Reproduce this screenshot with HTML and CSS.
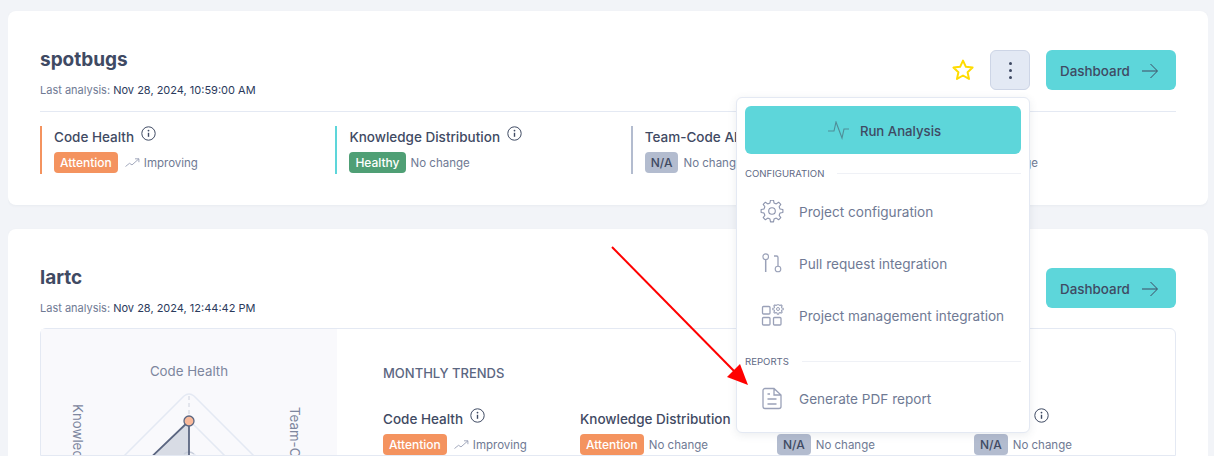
FILE: index.html
```html
<!DOCTYPE html>
<html lang="en-US">
    <head>
        <title>Projects</title>
        <meta name="viewport" content="width=device-width, initial-scale=1.0">
        <link rel="stylesheet" href="styles.css">
    </head>
    <body>
        <svg class="defs" width="0" height="0">
            <symbol id="info" viewBox="0 0 15 15">
                <circle cx="7.5" cy="7.5" r="6.7" fill="none" stroke="currentColor"/>
                <path d="M7.5 6.8v4" fill="none" stroke="currentColor" stroke-width="1.4"/>
                <circle cx="7.5" cy="4.6" r=".9" fill="currentColor"/>
            </symbol>
            <symbol id="trend" viewBox="0 0 15 10">
                <path d="M.5 8.5l4-3.2 2.5 1.6 6.8-6M10 .8h3.9v3.4" fill="none" stroke="currentColor" stroke-width=".8"/>
            </symbol>
            <symbol id="arrow" viewBox="0 0 16 16">
                <path d="M0 8h15M8.5 1l7 7-7 7" fill="none" stroke="currentColor" stroke-width="1"/>
            </symbol>
            <path id="cog" stroke-linejoin="round" d="M9.99 2.95L10.47.11H13.53L14.01 2.95L16.27 3.89L18.62 2.22L20.78 4.38L19.11 6.73L20.05 8.99L22.89 9.47V12.53L20.05 13.01L19.11 15.27L20.78 17.62L18.62 19.78L16.27 18.11L14.01 19.05L13.53 21.89H10.47L9.99 19.05L7.73 18.11L5.38 19.78L3.22 17.62L4.89 15.27L3.95 13.01L1.11 12.53V9.47L3.95 8.99L4.89 6.73L3.22 4.38L5.38 2.22L7.73 3.89z"/>
        </svg>

        <section class="card">
            <header class="card-head">
                <div>
                    <h2>spotbugs</h2>
                    <p class="last">Last analysis: <b>Nov 28, 2024, 10:59:00 AM</b></p>
                </div>
                <div class="actions">
                    <svg class="star" width="24" height="24" viewBox="0 0 24 24">
                        <path d="M12 2.6l2.9 6.2 6.7.8-5 4.6 1.4 6.7-6-3.4-6 3.4 1.4-6.7-5-4.6 6.7-.8z" fill="none" stroke="#ffdc00" stroke-width="2" stroke-linejoin="round"/>
                    </svg>
                    <button class="kebab"><i></i><i></i><i></i></button>
                    <a class="dash">Dashboard <svg width="16" height="16"><use href="#arrow"/></svg></a>
                </div>

                <div class="menu">
                    <a class="run">
                        <svg width="22" height="20" viewBox="0 0 22 20">
                            <path d="M1 10h6l2-9 6 16 2-9h5" fill="none" stroke="#4f8d97" stroke-width="1.1"/>
                        </svg>
                        Run Analysis
                    </a>
                    <div class="menu-title"><span>CONFIGURATION</span></div>
                    <a class="menu-item config">
                        <svg width="24" height="24" viewBox="0 0 24 24" fill="none" stroke="#8b93ac" stroke-width="1.1">
                            <use href="#cog"/>
                            <circle cx="12" cy="11" r="3.3"/>
                        </svg>
                        Project configuration
                    </a>
                    <a class="menu-item">
                        <svg width="24" height="24" viewBox="0 0 24 24" fill="none" stroke="#9aa1b8" stroke-width="1.1">
                            <circle cx="5.700" cy="4.700" r="2.800"/>
                            <path d="M5.700 7.500V20" stroke-width="1.500"/>
                            <path d="M14 4h2.500a1.500 1.500 0 0 1 1.500 1.500V14" stroke-width="1.300"/>
                            <circle cx="18" cy="17" r="2.800"/>
                        </svg>
                        Pull request integration
                    </a>
                    <a class="menu-item">
                        <svg width="24" height="24" viewBox="0 0 24 24" fill="none" stroke="#9aa1b8" stroke-width="1.300">
                            <rect x="2.500" y="2.500" width="7.500" height="7.500" rx="1"/>
                            <rect x="2.500" y="13.500" width="7.500" height="7.500" rx="1"/>
                            <rect x="13.500" y="13.500" width="7.500" height="7.500" rx="1"/>
                            <use href="#cog" transform="translate(18 5) scale(.48) translate(-12 -11)" stroke-width="2.200"/>
                            <circle cx="18" cy="5" r="1.500" stroke-width="1"/>
                        </svg>
                        Project management integration
                    </a>
                    <div class="menu-title reports"><span>REPORTS</span></div>
                    <a class="menu-item pdf">
                        <svg width="24" height="24" viewBox="0 0 24 24" fill="none" stroke="#9aa1b8" stroke-width="1.300">
                            <path d="M5 1.500h9l7 6.500v11.500a2 2 0 0 1-2 2H5a2 2 0 0 1-2-2v-16a2 2 0 0 1 2-2zM14 1.500V8h7M7.500 7h2.500M7.500 12h9M7.500 17h9"/>
                        </svg>
                        Generate PDF report
                    </a>
                </div>
            </header>

            <div class="metrics">
                <div class="metric orange">
                    <h3>Code Health <svg width="15" height="15"><use href="#info"/></svg></h3>
                    <p><span class="badge attention">Attention</span><svg class="trend" width="15" height="10"><use href="#trend"/></svg>Improving</p>
                </div>
                <div class="metric teal">
                    <h3>Knowledge Distribution <svg width="15" height="15"><use href="#info"/></svg></h3>
                    <p><span class="badge healthy">Healthy</span>No change</p>
                </div>
                <div class="metric gray">
                    <h3>Team-Code Alignment <svg width="15" height="15"><use href="#info"/></svg></h3>
                    <p><span class="badge na">N/A</span>No change</p>
                </div>
                <div class="metric gray">
                    <h3>Delivery <svg width="15" height="15"><use href="#info"/></svg></h3>
                    <p><span class="badge na">N/A</span>No change</p>
                </div>
            </div>
        </section>

        <section class="card">
            <header class="card-head">
                <div>
                    <h2>lartc</h2>
                    <p class="last">Last analysis: <b>Nov 28, 2024, 12:44:42 PM</b></p>
                </div>
                <div class="actions">
                    <a class="dash">Dashboard <svg width="16" height="16"><use href="#arrow"/></svg></a>
                </div>
            </header>

            <div class="panel">
                <div class="radar">
                    <svg width="296" height="127" viewBox="0 0 296 127">
                        <text class="axis" x="148" y="47" text-anchor="middle">Code Health</text>
                        <text class="axis" transform="translate(32 75) rotate(90)">Knowledge Distribution</text>
                        <text class="axis" transform="translate(249 78) rotate(90)">Team-Code Alignment</text>
                        <path d="M143 67q5-4 10 0l90 90M143 67l-90 90" fill="none" stroke="#e4e9f3" stroke-width="1.500"/>
                        <path d="M143 96q5-4 10 0l60 60" fill="none" stroke="#e4e9f3" stroke-width="1.500"/>
                        <path d="M153 125l30 30" fill="none" stroke="#e4e9f3" stroke-width="1.500"/>
                        <path d="M148 67v25" stroke="#cdd2de" stroke-dasharray="4 3"/>
                        <path d="M148 92L100 138h48z" fill="#d8dce5"/>
                        <path d="M143 125q5-4 10 0" fill="none" stroke="#c9cfdc" stroke-width="1.500"/>
                        <path d="M148 92L100 138M148 92v46" fill="none" stroke="#5b6681" stroke-width="1.800"/>
                        <circle cx="148" cy="92" r="5" fill="#f9b99a" stroke="#5b6681" stroke-width="1.300"/>
                    </svg>
                </div>
                <div class="trends">
                    <h4>MONTHLY TRENDS</h4>
                    <div class="trend-grid">
                        <div class="trend-item">
                            <h3>Code Health <svg width="15" height="15"><use href="#info"/></svg></h3>
                            <p><span class="badge attention">Attention</span><svg class="trend" width="15" height="10"><use href="#trend"/></svg>Improving</p>
                        </div>
                        <div class="trend-item">
                            <h3>Knowledge Distribution <svg width="15" height="15"><use href="#info"/></svg></h3>
                            <p><span class="badge attention">Attention</span>No change</p>
                        </div>
                        <div class="trend-item">
                            <h3>Team-Code Alignment</h3>
                            <p><span class="badge na">N/A</span>No change</p>
                        </div>
                        <div class="trend-item">
                            <h3>Delivery <svg width="15" height="15"><use href="#info"/></svg></h3>
                            <p><span class="badge na">N/A</span>No change</p>
                        </div>
                    </div>
                </div>
            </div>
        </section>

        <svg class="pointer" width="150" height="150" viewBox="0 0 150 150">
            <path d="M1 1L124 126" stroke="#ff0000" stroke-width="2"/>
            <path d="M137 139l-21-8 13-13z" fill="#ff0000"/>
        </svg>
    </body>
</html>
```

FILE: styles.css
```css
* {
    box-sizing: border-box;
    margin: 0;
}

html {
    height: 456px;
    overflow: hidden;
    background: #f2f4f8;
    color: #3f4a63;
    font-family: Inter, "Noto Sans", sans-serif;
}

body {
    width: 1200px;
    padding-top: 11px;
    margin-left: 8px;
}

.defs {
    display: block;
    height: 0;
}

.card {
    padding: 39px 32px 31px;
    margin-bottom: 24px;
    background: #fff;
    border-radius: 8px;
    box-shadow: 0 1px 3px rgba(63, 74, 99, 0.05);
}

.card-head {
    position: relative;
    display: flex;
    justify-content: space-between;
    align-items: flex-start;
}

h2 {
    font-size: 19px;
    line-height: 20px;
    font-weight: 700;
}

.last {
    margin-top: 13px;
    font-size: 11px;
    line-height: 14px;
    color: #6f7a94;
}

.last b {
    font-weight: 400;
    color: #2b3a5c;
}

.actions {
    display: flex;
    align-items: center;
}

.star {
    margin-right: 15px;
}

.kebab {
    display: flex;
    flex-direction: column;
    justify-content: center;
    align-items: center;
    gap: 4px;
    width: 40px;
    height: 40px;
    margin-right: 16px;
    padding: 0;
    background: #e3e9f4;
    border: 1px solid #cdd5e6;
    border-radius: 6px;
}

.kebab i {
    width: 3px;
    height: 3px;
    background: #3f4a63;
    border-radius: 50%;
}

.dash {
    display: flex;
    justify-content: space-between;
    align-items: center;
    width: 130px;
    height: 40px;
    padding: 1px 18px 0 14px;
    background: #5dd6da;
    border-radius: 6px;
    font-size: 13.4px;
    font-weight: 500;
}

.menu {
    position: absolute;
    top: 47px;
    right: 146px;
    z-index: 2;
    width: 294px;
    height: 336px;
    padding: 8px;
    background: #fff;
    border: 1px solid #e4e9f3;
    border-radius: 6px;
    box-shadow: 0 2px 8px rgba(63, 74, 99, 0.1);
}

.run {
    display: flex;
    justify-content: center;
    align-items: center;
    gap: 11px;
    height: 48px;
    padding: 2px 0 0 2px;
    background: #5dd6da;
    border-radius: 6px;
    font-size: 13.2px;
    font-weight: 500;
}

.menu-title {
    display: flex;
    align-items: center;
    gap: 13px;
    height: 14px;
    margin-top: 12px;
    font-size: 9.6px;
    color: #5f6a85;
}

.menu-title::after {
    content: "";
    flex: 1;
    height: 1px;
    background: #eff1f6;
}

.reports {
    margin-top: 12px;
}

.menu-item {
    display: flex;
    align-items: center;
    gap: 15px;
    height: 52px;
    padding-left: 15px;
    font-size: 13.6px;
    color: #6f7a94;
}

.config {
    margin-top: 6px;
}

.pdf {
    margin-top: 5px;
}

.metrics {
    display: grid;
    grid-template-columns: repeat(4, 1fr);
    gap: 45.5px;
    padding-top: 14px;
    margin-top: 14px;
    border-top: 1px solid #e4e9f3;
}

.metric {
    height: 48px;
    padding-left: 12px;
    border-left: 2px solid;
}

.orange {
    border-color: #f4935f;
}

.teal {
    border-color: #5dd6da;
}

.gray {
    border-color: #b3bccf;
}

h3 {
    display: flex;
    align-items: flex-start;
    gap: 7px;
    font-size: 13.5px;
    line-height: 22px;
    font-weight: 500;
    white-space: nowrap;
}

.metric p,
.trend-item p {
    display: flex;
    align-items: center;
    margin-top: 4px;
    font-size: 11.5px;
    color: #6f7a94;
}

.badge {
    height: 21px;
    padding: 0 6px;
    margin-right: 5px;
    border-radius: 4px;
    line-height: 21px;
    font-size: 12px;
    font-weight: 500;
    color: #fff;
}

.attention {
    background: #f4935f;
}

.healthy {
    background: #4f9f75;
}

.na {
    background: #b3bccf;
    color: #3f4a63;
}

.trend {
    margin: 0 4px 0 2px;
    color: #8b93ac;
}

.panel {
    display: flex;
    height: 128px;
    margin-top: 13px;
    border: 1px solid #e4e9f3;
    border-radius: 6px 6px 0 0;
}

.radar {
    width: 296px;
    overflow: hidden;
    background: #f9f9fc;
}

.radar svg {
    display: block;
}

.axis {
    font-size: 13.3px;
    fill: #7d869e;
}

.trends {
    padding: 36px 0 0 46px;
}

h4 {
    font-size: 13px;
    line-height: 17px;
    font-weight: 500;
    color: #5b6681;
}

.trend-grid {
    display: grid;
    grid-template-columns: repeat(4, 197px);
    margin-top: 26px;
}

.pointer {
    position: absolute;
    top: 246px;
    left: 611px;
    z-index: 3;
}
```
